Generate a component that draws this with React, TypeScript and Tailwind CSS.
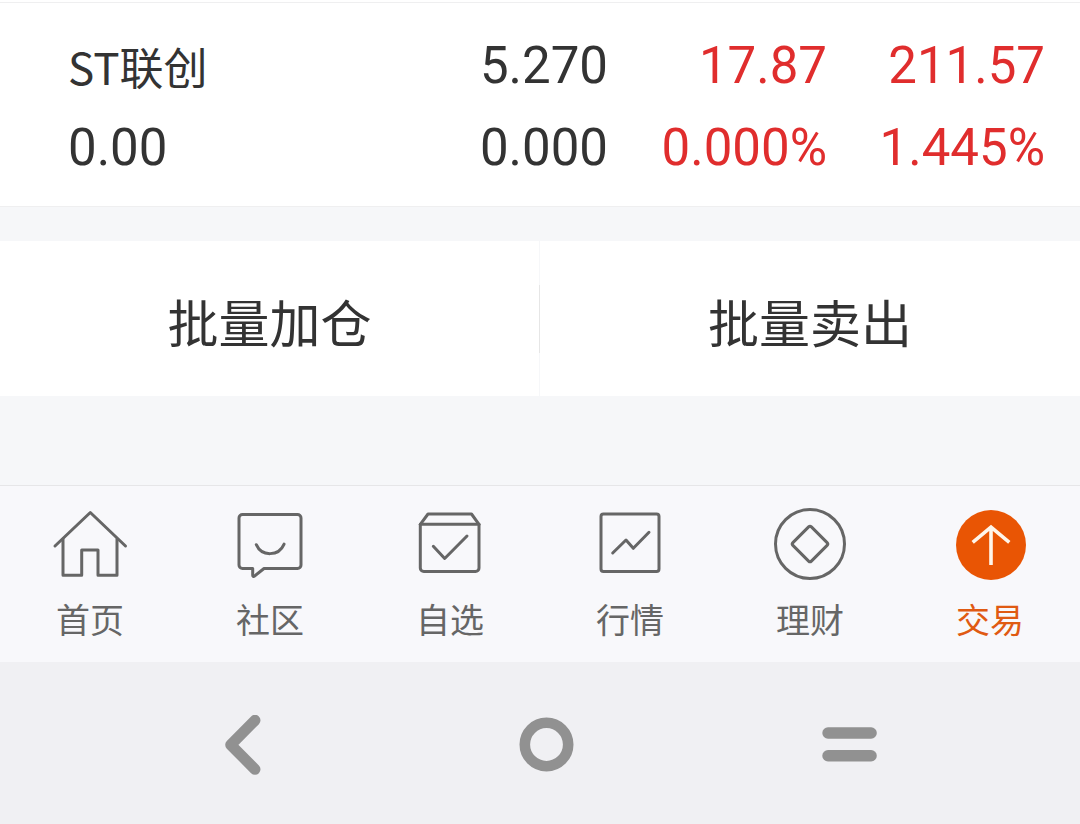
import type { ReactNode } from "react";
import clsx from "clsx";

const holding = {
  name: "ST联创",
  marketValue: "0.00",
  price: "5.270",
  cost: "0.000",
  dayProfit: "17.87",
  dayRate: "0.000%",
  totalProfit: "211.57",
  totalRate: "1.445%",
};

type Tab = { label: string; icon: ReactNode; active?: boolean };

const tabs: Tab[] = [
  {
    label: "首页",
    icon: (
      <>
        <path d="M5 41 40.3 7.5 75.5 41" />
        <path d="M13 34v36.3h18.7V45H48v25.3h19V34" />
      </>
    ),
  },
  {
    label: "社区",
    icon: (
      <>
        <path d="M12.5 9.5h55a3.5 3.5 0 0 1 3.5 3.5v47a3.5 3.5 0 0 1-3.5 3.5H34l-9.5 7.6c-1 .8-1.8.3-1.8-.8v-6.8H12.5A3.5 3.5 0 0 1 9 60V13a3.5 3.5 0 0 1 3.5-3.5z" />
        <path d="M26.3 39.7c5.2 12 22.4 12 27.8-.6" />
      </>
    ),
  },
  {
    label: "自选",
    icon: (
      <>
        <path d="M10.3 19.3 18 9h43.5L69 19.3V63a3.5 3.5 0 0 1-3.5 3.5H13.8a3.5 3.5 0 0 1-3.5-3.5z" />
        <path d="M10.3 19.3H69" />
        <path d="M23.3 41.3 34.7 53.5 57 31" />
      </>
    ),
  },
  {
    label: "行情",
    icon: (
      <>
        <rect x="11" y="9" width="58" height="57.5" rx="2.5" />
        <path d="M22.7 48 36 35l7.3 8.3 15.7-16" />
      </>
    ),
  },
  {
    label: "理财",
    icon: (
      <>
        <circle cx="40" cy="39" r="34.5" />
        <path d="M38.6 21.9a2 2 0 0 1 2.8 0l15.7 15.7a2 2 0 0 1 0 2.8L41.4 56.1a2 2 0 0 1-2.8 0L22.9 40.4a2 2 0 0 1 0-2.8z" />
      </>
    ),
  },
  {
    label: "交易",
    active: true,
    icon: (
      <>
        <circle cx="41" cy="40" r="35" fill="#e95504" stroke="none" />
        <path d="M41 60V22M22.7 37.3 41 22l18.3 15.3" stroke="#fff5ea" strokeWidth="3.6" strokeLinecap="butt" strokeLinejoin="miter" />
      </>
    ),
  },
];

function HoldingTable() {
  return (
    <section className="border-b border-[#efeff0] bg-white pt-0.5">
      <div className="border-t border-[#efeff0] pt-[22px] pb-[17px]">
        <table className="w-full table-fixed text-right text-[51px] leading-[82px] text-[#333]">
          <colgroup>
            <col />
            <col className="w-[200px]" />
            <col className="w-[219px]" />
            <col className="w-[253px]" />
          </colgroup>
          <tbody>
            <tr>
              <th
                scope="row"
                className="p-0 pl-[68px] text-left align-middle font-['Noto_Sans_CJK_SC',sans-serif] text-[44px] font-normal"
              >
                {holding.name}
              </th>
              <td className="p-0">{holding.price}</td>
              <td className="p-0 text-[#e02d2d]">{holding.dayProfit}</td>
              <td className="p-0 pr-[35px] text-[#e02d2d]">{holding.totalProfit}</td>
            </tr>
            <tr>
              <td className="p-0 pl-[68px] text-left">{holding.marketValue}</td>
              <td className="p-0">{holding.cost}</td>
              <td className="p-0 text-[#e02d2d]">{holding.dayRate}</td>
              <td className="p-0 pr-[35px] text-[#e02d2d]">{holding.totalRate}</td>
            </tr>
          </tbody>
        </table>
      </div>
    </section>
  );
}

function BatchActions() {
  return (
    <section className="mt-[34px] grid grid-cols-2 bg-white text-[51px] leading-[75px] text-[#333]">
      <div className="flex">
        <button type="button" className="flex-1 pt-[47px] pb-[33px]">
          批量加仓
        </button>
        <div className="flex w-px items-center bg-[#f6f7f9]">
          <div className="h-[68px] w-px bg-[#e6e6e6]" />
        </div>
      </div>
      <button type="button" className="pt-[47px] pb-[33px]">
        批量卖出
      </button>
    </section>
  );
}

function TabBar() {
  return (
    <nav className="mt-[89px] grid grid-cols-6 border-t border-[#e6e6e8] bg-[#f8f8fb] pt-[19px] pb-4">
      {tabs.map((tab) => (
        <a
          key={tab.label}
          href="#"
          aria-current={tab.active ? "page" : undefined}
          className={clsx(
            "flex flex-col items-center text-[34px] leading-[50px]",
            tab.active ? "text-[#e05a12]" : "text-[#666]"
          )}
        >
          <svg
            viewBox="0 0 80 80"
            className="mb-[11px] size-20"
            fill="none"
            stroke="#666"
            strokeWidth="3"
            strokeLinecap="round"
            strokeLinejoin="round"
            aria-hidden="true"
          >
            {tab.icon}
          </svg>
          {tab.label}
        </a>
      ))}
    </nav>
  );
}

function SystemBar() {
  return (
    <div className="grid flex-1 grid-cols-3 justify-items-center bg-[#f0f0f3] pt-[53px] pr-20 pb-[49px] pl-[91px]">
      <button type="button" aria-label="返回" className="size-[60px]">
        <svg viewBox="0 0 60 60" fill="none" stroke="#919191" strokeWidth="11" strokeLinecap="round" strokeLinejoin="round">
          <path d="M42 5.3 17.7 29.8 42 54.3" />
        </svg>
      </button>
      <button type="button" aria-label="主屏幕" className="size-[60px]">
        <svg viewBox="0 0 60 60" fill="none" stroke="#919191" strokeWidth="10.6">
          <circle cx="30.5" cy="29.5" r="21.7" />
        </svg>
      </button>
      <button type="button" aria-label="最近任务" className="size-[60px]">
        <svg viewBox="0 0 60 60" fill="#919191">
          <rect x="3.3" y="12.3" width="54.5" height="11.4" rx="5.7" />
          <rect x="3.3" y="35" width="54.5" height="11.4" rx="5.7" />
        </svg>
      </button>
    </div>
  );
}

export default function App() {
  return (
    <main className="flex min-h-screen flex-col bg-[#f6f7f9] font-[Roboto,'Noto_Sans_CJK_SC',sans-serif]">
      <HoldingTable />
      <BatchActions />
      <TabBar />
      <SystemBar />
    </main>
  );
}
